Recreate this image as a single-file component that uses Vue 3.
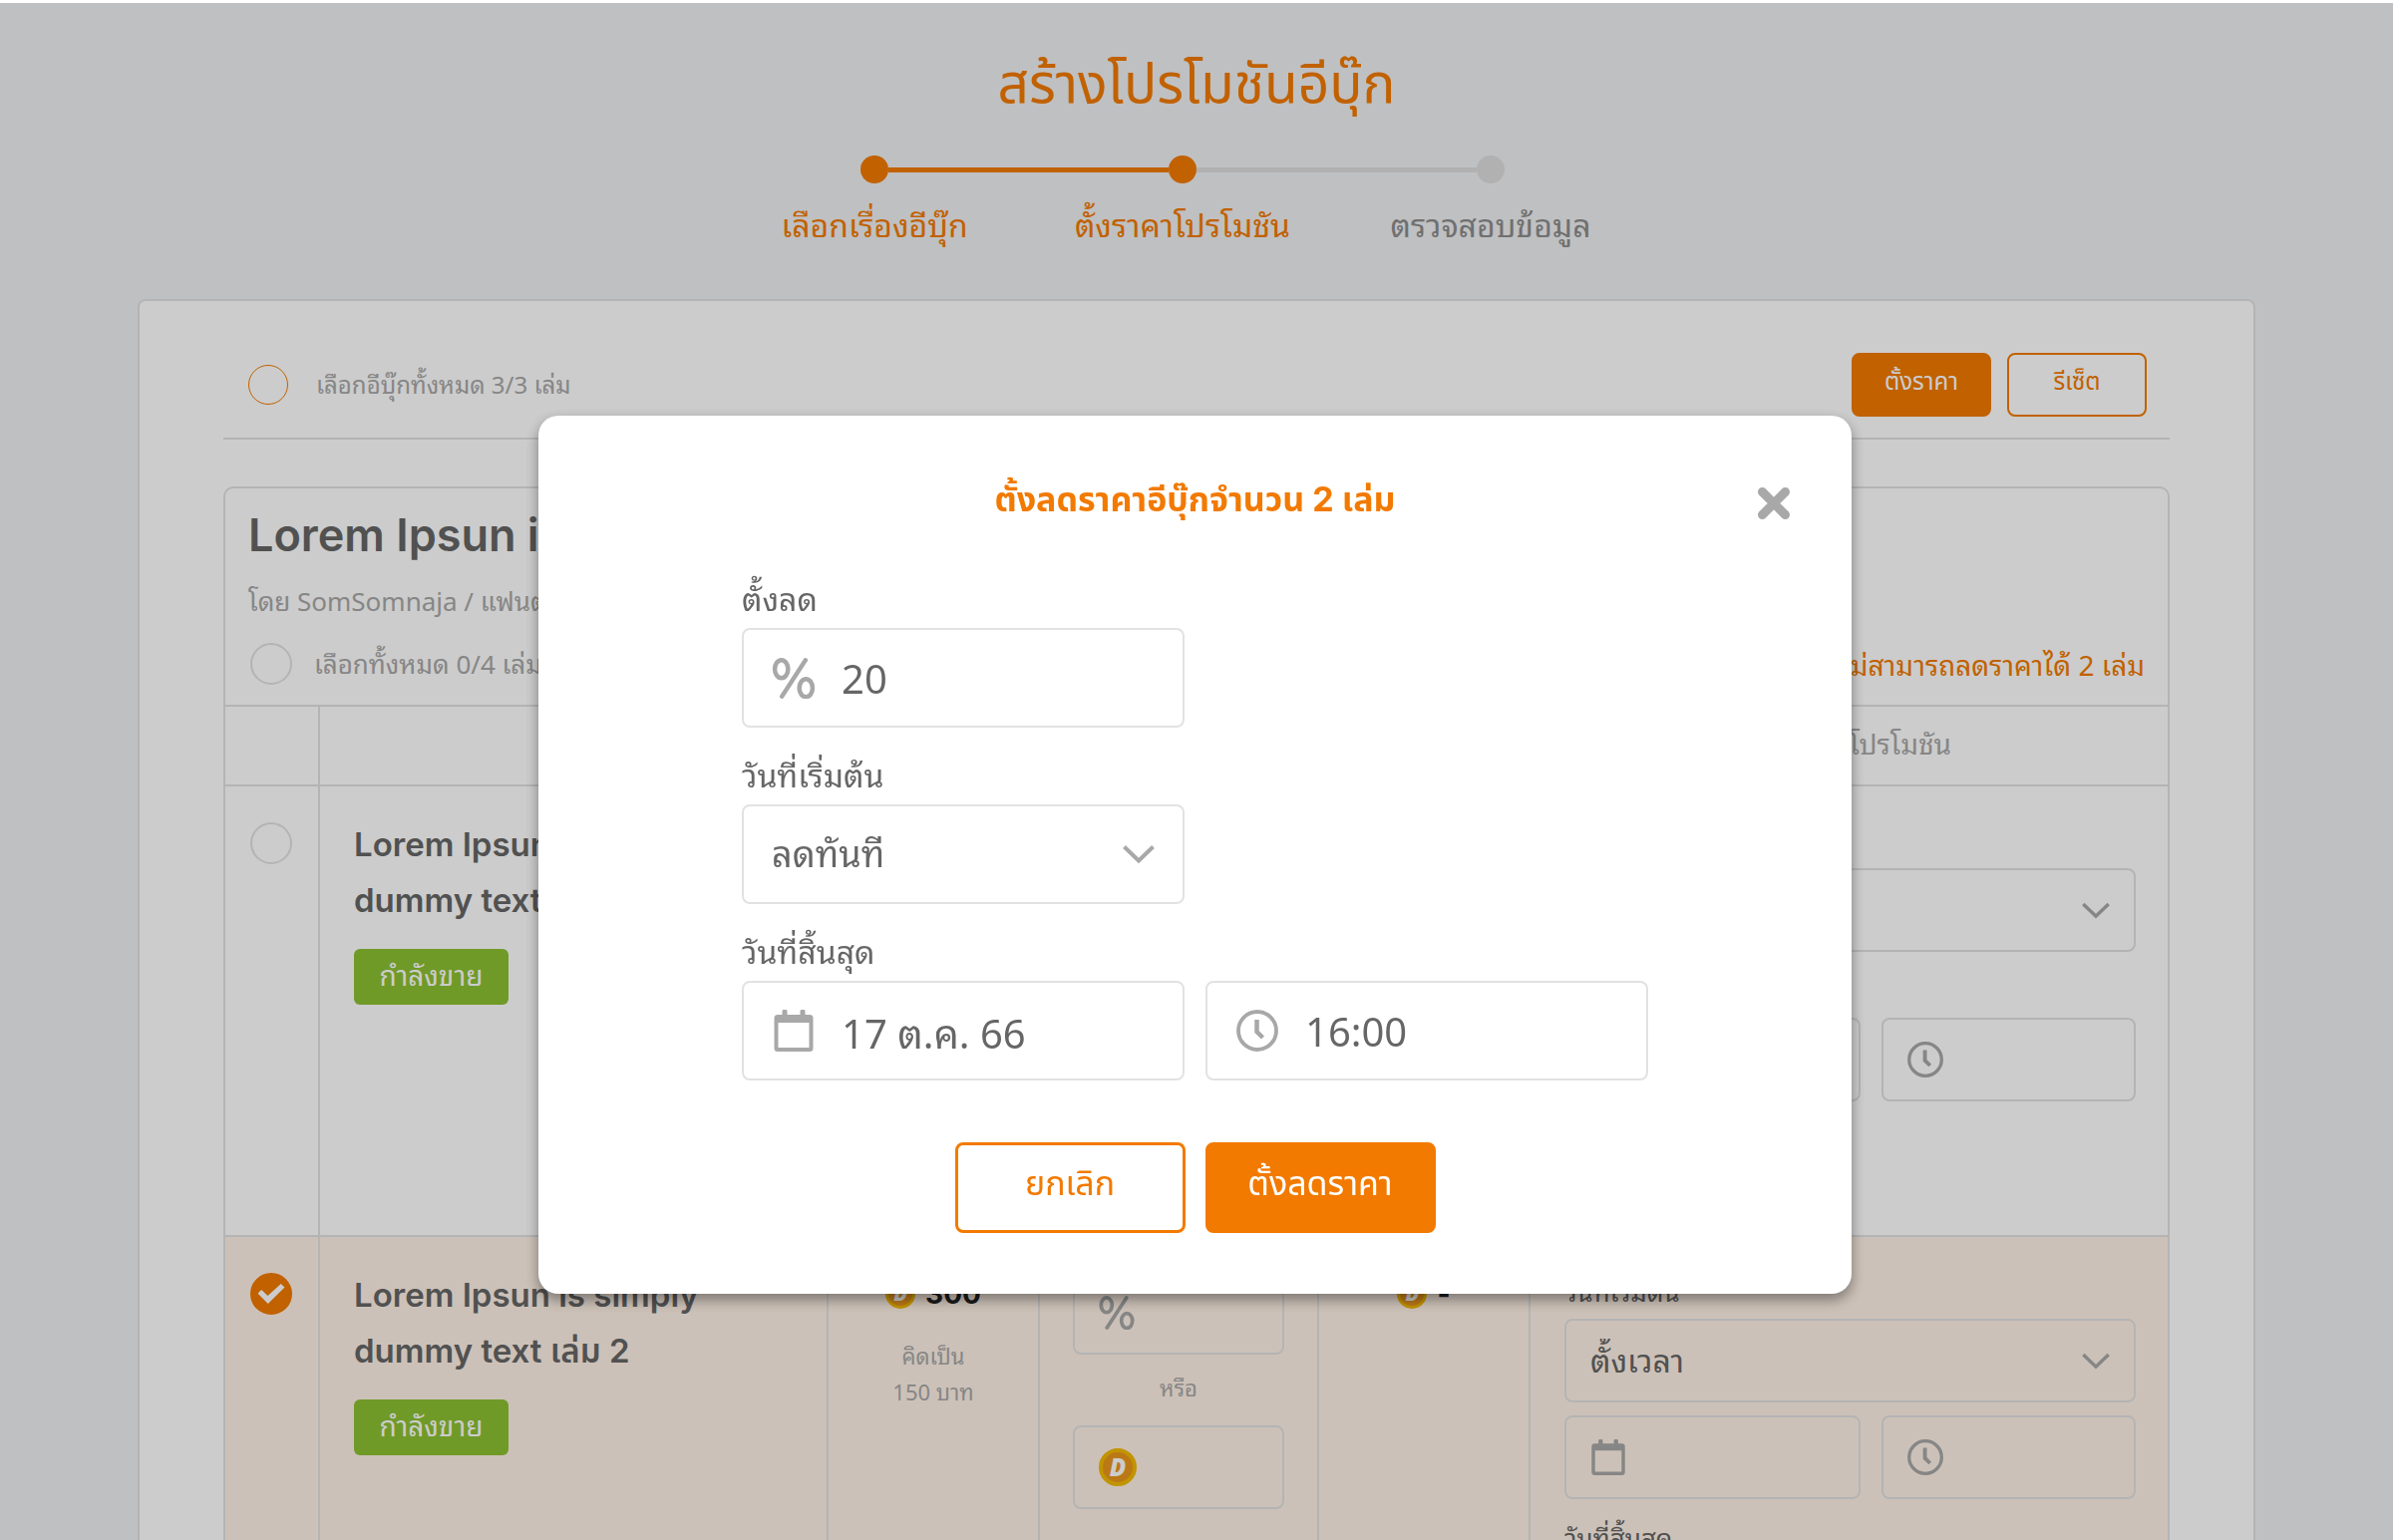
<script setup>
import { ref } from 'vue'

const steps = [
  { label: 'เลือกเรื่องอีบุ๊ก', state: 'done' },
  { label: 'ตั้งราคาโปรโมชัน', state: 'current' },
  { label: 'ตรวจสอบข้อมูล', state: 'todo' },
]

const books = ref([
  { id: 1, lines: ['Lorem Ipsun is simply', 'dummy text เล่ม 1'], price: 300, baht: 150, checked: false, start: 'ลดทันที', timed: false },
  { id: 2, lines: ['Lorem Ipsun is simply', 'dummy text เล่ม 2'], price: 300, baht: 150, checked: true, start: 'ตั้งเวลา', timed: true },
])

const discount = ref('20')
const endDate = ref('17 ต.ค. 66')
const endTime = ref('16:00')
</script>

<template>
  <svg class="defs" aria-hidden="true">
    <symbol id="i-percent" viewBox="0 0 42 40">
      <g fill="none" stroke="currentColor" stroke-linecap="round">
        <ellipse cx="9" cy="11" rx="6.5" ry="8.7" stroke-width="4.4" />
        <ellipse cx="33" cy="29.5" rx="6.5" ry="8.7" stroke-width="4.4" />
        <path d="M32.5 2.3 9.5 37.7" stroke-width="4.4" />
      </g>
    </symbol>
    <symbol id="i-calendar" viewBox="0 0 40 42">
      <path fill="currentColor" fill-rule="evenodd" d="M8.500 2a2 2 0 0 1 5 0V5H26.500V2a2 2 0 0 1 5 0V5H36a3.500 3.500 0 0 1 3.500 3.500V38.500A3.500 3.500 0 0 1 36 42H4A3.500 3.500 0 0 1 .5 38.500V8.500A3.500 3.500 0 0 1 4 5H8.500ZM4.500 13V38H35.500V13Z" />
    </symbol>
    <symbol id="i-clock" viewBox="0 0 42 42">
      <circle cx="21" cy="21" r="19" fill="none" stroke="currentColor" stroke-width="3.800" />
      <path d="M20.500 10V22l6 6" fill="none" stroke="currentColor" stroke-width="4.500" />
    </symbol>
    <symbol id="i-chevron" viewBox="0 0 32 18">
      <path d="M1.500 1.500 16 15.500 30.500 1.500" fill="none" stroke="currentColor" stroke-width="4" />
    </symbol>
    <symbol id="i-close" viewBox="0 0 34 34">
      <path d="M5.500 5.500 28.500 28.500M28.500 5.500 5.500 28.500" fill="none" stroke="currentColor" stroke-width="9" stroke-linecap="round" />
    </symbol>
  </svg>

  <main class="page">
    <header class="top">
      <h1>สร้างโปรโมชันอีบุ๊ก</h1>
      <ol class="steps">
        <li v-for="s in steps" :key="s.label" :class="s.state">
          <span class="track"><i></i><b></b><i></i></span>
          <span class="step-label">{{ s.label }}</span>
        </li>
      </ol>
    </header>

    <section class="card">
      <div class="bar">
        <label class="pick all"><input type="checkbox" class="tick accent" /><span>เลือกอีบุ๊กทั้งหมด 3/3 เล่ม</span></label>
        <div class="bar-buttons">
          <button type="button" class="btn primary">ตั้งราคา</button>
          <button type="button" class="btn">รีเซ็ต</button>
        </div>
      </div>

      <article class="group">
        <div class="group-head">
          <h2>Lorem Ipsun is simply</h2>
          <p class="author">โดย SomSomnaja / แฟนตาซี</p>
          <div class="group-pick">
            <label class="pick"><input type="checkbox" class="tick" /><span>เลือกทั้งหมด 0/4 เล่ม</span></label>
            <p class="warn">ไม่สามารถลดราคาได้ 2 เล่ม</p>
          </div>
        </div>
        <table>
          <colgroup>
            <col class="c-tick" /><col /><col class="c-price" /><col class="c-discount" /><col class="c-price" /><col class="c-dates" />
          </colgroup>
          <thead>
            <tr>
              <th></th>
              <th>อีบุ๊ก</th>
              <th>ราคาปก</th>
              <th>ส่วนลด</th>
              <th>ราคาลด</th>
              <th>ระยะเวลาโปรโมชัน</th>
            </tr>
          </thead>
          <tbody>
            <tr v-for="b in books" :key="b.id" :class="{ selected: b.checked }">
              <td class="t-tick"><input v-model="b.checked" type="checkbox" class="tick" :aria-label="b.lines.join(' ')" /></td>
              <td class="t-name">
                <h3><span v-for="l in b.lines" :key="l">{{ l }}</span></h3>
                <span class="badge">กำลังขาย</span>
              </td>
              <td class="t-price">
                <p class="coins"><span class="coin small">D</span><strong>{{ b.price }}</strong></p>
                <p class="note">คิดเป็น<br />{{ b.baht }} บาท</p>
              </td>
              <td class="t-discount">
                <label class="field"><svg class="ic percent"><use href="#i-percent" /></svg><input type="text" aria-label="ส่วนลดเปอร์เซ็นต์" /></label>
                <p class="or">หรือ</p>
                <label class="field"><span class="coin">D</span><input type="text" aria-label="ส่วนลดเหรียญ" /></label>
              </td>
              <td class="t-price">
                <p class="coins"><span class="coin small">D</span><strong>-</strong></p>
              </td>
              <td class="t-dates">
                <label class="caption" :for="'start' + b.id">วันที่เริ่มต้น</label>
                <div class="field">
                  <select :id="'start' + b.id" v-model="b.start"><option>ลดทันที</option><option>ตั้งเวลา</option></select>
                  <svg class="ic chevron"><use href="#i-chevron" /></svg>
                </div>
                <div v-if="b.timed" class="pair">
                  <label class="field"><svg class="ic calendar"><use href="#i-calendar" /></svg><input type="text" aria-label="วันที่เริ่มต้น" /></label>
                  <label class="field"><svg class="ic clock"><use href="#i-clock" /></svg><input type="text" aria-label="เวลาเริ่มต้น" /></label>
                </div>
                <label class="caption later" :for="'end' + b.id">วันที่สิ้นสุด</label>
                <div class="pair end">
                  <label class="field"><svg class="ic calendar"><use href="#i-calendar" /></svg><input :id="'end' + b.id" type="text" /></label>
                  <label class="field"><svg class="ic clock"><use href="#i-clock" /></svg><input type="text" aria-label="เวลาสิ้นสุด" /></label>
                </div>
              </td>
            </tr>
          </tbody>
        </table>
      </article>
    </section>
  </main>

  <div class="overlay">
    <form class="modal" role="dialog" aria-labelledby="modal-title" @submit.prevent>
      <h2 id="modal-title">ตั้งลดราคาอีบุ๊กจำนวน 2 เล่ม</h2>
      <button type="button" class="close" aria-label="ปิด"><svg><use href="#i-close" /></svg></button>
      <div class="form">
        <div class="item">
          <label for="discount">ตั้งลด</label>
          <div class="field"><svg class="ic percent"><use href="#i-percent" /></svg><input id="discount" v-model="discount" type="text" /></div>
        </div>
        <div class="item first">
          <label for="start">วันที่เริ่มต้น</label>
          <div class="field">
            <select id="start"><option>ลดทันที</option><option>ตั้งเวลา</option></select>
            <svg class="ic chevron"><use href="#i-chevron" /></svg>
          </div>
        </div>
        <div class="item first">
          <label for="end">วันที่สิ้นสุด</label>
          <div class="field"><svg class="ic calendar"><use href="#i-calendar" /></svg><input id="end" v-model="endDate" type="text" /></div>
        </div>
        <div class="item">
          <div class="field"><svg class="ic clock"><use href="#i-clock" /></svg><input v-model="endTime" type="text" aria-label="เวลาสิ้นสุด" /></div>
        </div>
      </div>
      <div class="actions">
        <button type="button" class="btn">ยกเลิก</button>
        <button type="submit" class="btn primary">ตั้งลดราคา</button>
      </div>
    </form>
  </div>
</template>

<style>
body {
  overflow: hidden;
  background: #fff;
}
</style>

<style scoped>
* {
  box-sizing: border-box;
  margin: 0;
}
.defs {
  position: absolute;
  width: 0;
  height: 0;
}
.page,
.overlay {
  --orange: #f27a00;
  --line: #e2e2e2;
  --grey: #a8a8a8;
  --text: #666;
  font-family: "Noto Sans", "Noto Sans Thai Looped", "Noto Sans Thai", sans-serif;
  color: var(--text);
}
input,
select,
button {
  font: inherit;
  color: inherit;
}
h1,
h2,
h3,
strong,
.btn {
  font-family: Inter, "Noto Sans Thai", sans-serif;
}
.page {
  height: 100vh;
  overflow: hidden;
  border-top: 3px solid #fff;
  background: #eff1f3;
}
.top {
  padding: 50px 0 54px;
  text-align: center;
}
h1 {
  font-size: 55px;
  line-height: 60px;
  font-weight: 400;
  color: var(--orange);
}
.steps {
  display: grid;
  grid-template-columns: repeat(3, 309px);
  justify-content: center;
  margin-top: 43px;
  padding: 0 28px 0 0;
  list-style: none;
  font-size: 32px;
  line-height: 40px;
  color: var(--orange);
}
.track {
  display: flex;
  align-items: center;
  height: 28px;
  margin-bottom: 22px;
}
.track i {
  flex: 1;
  height: 5px;
  background: currentColor;
}
.track b {
  width: 28px;
  height: 28px;
  border-radius: 50%;
  background: currentColor;
}
li:first-child i:first-child,
li:last-child i:last-child {
  visibility: hidden;
}
.current i:last-child,
.todo .track {
  color: #dedede;
}
.todo {
  color: #8c8c8c;
}
.card {
  margin: 0 138px;
  padding: 0 84px;
  border: 2px solid var(--line);
  border-radius: 8px;
  background: #fff;
}
.bar {
  display: flex;
  justify-content: space-between;
  align-items: center;
  padding: 52px 23px 21px 25px;
  border-bottom: 2px solid var(--line);
}
.bar-buttons {
  display: flex;
  gap: 16px;
}
.btn {
  padding: 0;
  border: 3px solid var(--orange);
  border-radius: 8px;
  background: transparent;
  color: var(--orange);
}
.btn.primary {
  background: var(--orange);
  color: #fff;
}
.bar .btn {
  width: 140px;
  height: 64px;
  padding-bottom: 4px;
  border-width: 2px;
  font-size: 24px;
}
.pick {
  display: flex;
  align-items: center;
  gap: 22px;
  padding-left: 2px;
  font-size: 26px;
  line-height: 40px;
  color: var(--grey);
}
.pick.all {
  gap: 28px;
  padding-left: 0;
  font-size: 24px;
}
.tick {
  display: grid;
  place-items: center;
  flex: none;
  appearance: none;
  width: 42px;
  height: 42px;
  border: 2px solid var(--line);
  border-radius: 50%;
}
.tick.accent {
  width: 40px;
  height: 40px;
  border: 1px solid var(--orange);
}
.tick:checked {
  border-color: var(--orange);
  background: var(--orange);
}
.tick:checked::before {
  content: "";
  width: 27px;
  height: 20px;
  background: #fff;
  clip-path: polygon(0 48%, 14% 30%, 37% 60%, 86% 0, 100% 18%, 38% 100%);
}
.group {
  margin-top: 47px;
  border: 2px solid var(--line);
  border-radius: 10px;
}
.group-head {
  padding: 17px 23px 20px;
}
.group-head h2 {
  font-size: 45px;
  line-height: 60px;
  font-weight: 600;
}
.author {
  margin-top: 16px;
  font-size: 26px;
  line-height: 40px;
  color: var(--grey);
}
.group-pick {
  display: flex;
  justify-content: space-between;
  align-items: center;
  margin-top: 22px;
}
.warn {
  padding-top: 2px;
  font-size: 28px;
  line-height: 40px;
  color: var(--orange);
}
table {
  width: 100%;
  table-layout: fixed;
  border-spacing: 0;
}
.c-tick { width: 95px; }
.c-price { width: 212px; }
.c-discount { width: 280px; }
.c-dates { width: 639px; }
th,
td {
  border-top: 2px solid var(--line);
  border-right: 2px solid var(--line);
  padding: 0;
}
th:last-child,
td:last-child {
  border-right: 0;
}
th {
  height: 80px;
  padding-bottom: 8px;
  font-size: 28px;
  font-weight: 400;
  color: var(--grey);
}
td {
  height: 452px;
  vertical-align: top;
}
.selected {
  background: #fff2e6;
}
.t-tick {
  padding: 36px 25px;
}
.t-name {
  padding: 30px 34px;
}
h3 {
  font-size: 33px;
  line-height: 56px;
  font-weight: 600;
}
h3 span {
  display: block;
}
.badge {
  display: inline-block;
  width: 155px;
  height: 56px;
  margin-top: 21px;
  border-radius: 6px;
  background: #8cc132;
  color: #fff;
  font-size: 28px;
  line-height: 52px;
  text-align: center;
}
.t-price {
  padding: 37px 0;
  text-align: center;
}
.coins {
  display: flex;
  justify-content: center;
  align-items: center;
  gap: 10px;
  height: 40px;
  font-size: 28px;
  color: #222;
}
.coin {
  display: grid;
  place-items: center;
  flex: none;
  width: 38px;
  height: 38px;
  border: 4px solid #f2b900;
  border-radius: 50%;
  background: #ea961c;
  color: #fff;
  font: italic 800 24px/30px "Open Sans", sans-serif;
}
.coin.small {
  width: 30px;
  height: 30px;
  border-width: 3px;
  font-size: 20px;
  line-height: 24px;
}
.note {
  margin-top: 24px;
}
.note,
.or {
  font-size: 22px;
  line-height: 36px;
  color: var(--grey);
}
.t-discount {
  padding: 34px 33px;
}
.or {
  margin: 15px 0 20px;
  text-align: center;
}
.t-dates {
  padding: 30px 32px 30px 34px;
}
.caption {
  display: block;
  margin-bottom: 2px;
  font-size: 26px;
  line-height: 50px;
}
.later {
  margin-top: 14px;
}
.field {
  display: flex;
  align-items: center;
  height: 84px;
  padding: 0 24px;
  border: 2px solid var(--line);
  border-radius: 8px;
}
.field input,
.field select {
  flex: 1;
  min-width: 0;
  width: 0;
  height: 100%;
  padding: 0;
  border: 0;
  outline: 0;
  appearance: none;
  background: transparent;
}
.field select {
  padding-bottom: 2px;
  font-size: 32px;
}
.ic {
  flex: none;
  color: var(--grey);
}
.percent { width: 36px; height: 34px; }
.calendar { width: 36px; height: 36px; }
.clock { width: 36px; height: 36px; }
.chevron { width: 28px; height: 17px; }
.pair {
  display: grid;
  grid-template-columns: 297px 1fr;
  gap: 21px;
  margin-top: 13px;
}
.pair.end {
  margin-top: 0;
}
.overlay {
  position: fixed;
  inset: 3px 0 0;
  display: flex;
  justify-content: center;
  align-items: flex-start;
  padding: 414px 3px 0 0;
  background: rgba(0, 0, 0, 0.2);
}
.modal {
  position: relative;
  width: 1317px;
  padding: 60px 204px 61px;
  border-radius: 20px;
  background: #fff;
  box-shadow: 0 6px 14px rgba(0, 0, 0, 0.4);
}
.modal h2 {
  font-size: 34px;
  line-height: 48px;
  font-weight: 700;
  text-align: center;
  color: var(--orange);
}
.close {
  position: absolute;
  top: 71px;
  right: 61px;
  padding: 0;
  border: 0;
  background: none;
  color: var(--grey);
}
.close svg {
  display: block;
  width: 34px;
  height: 34px;
}
.form {
  display: grid;
  grid-template-columns: 1fr 1fr;
  gap: 28px 21px;
  margin-top: 56px;
}
.first {
  grid-column: 1;
}
.item {
  align-self: end;
}
.item label {
  display: block;
  margin-bottom: 9px;
  font-size: 32px;
  line-height: 40px;
}
.modal .field {
  height: 100px;
  padding: 0 28px;
}
.modal .field input {
  margin-left: 26px;
  font-size: 40px;
}
.modal .field select {
  font-size: 36px;
}
.modal .percent { width: 44px; height: 41px; }
.modal .calendar { width: 44px; height: 42px; }
.modal .clock { width: 44px; height: 42px; }
.modal .chevron { width: 32px; height: 18px; }
.actions {
  display: flex;
  justify-content: center;
  gap: 20px;
  margin-top: 62px;
}
.actions .btn {
  width: 231px;
  height: 91px;
  padding-bottom: 6px;
  font-size: 34px;
}
</style>
